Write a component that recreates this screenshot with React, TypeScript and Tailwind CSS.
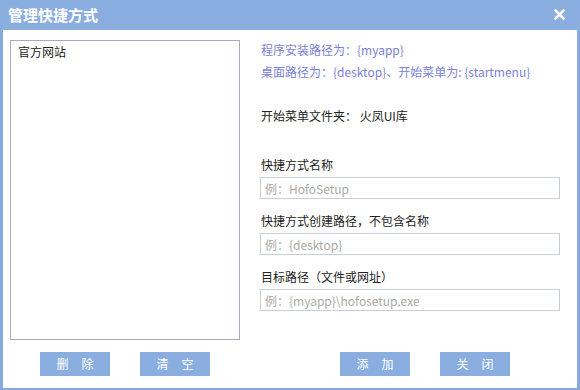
import React from "react";

const font = { fontFamily: '"Microsoft YaHei", "Noto Sans CJK SC", "Noto Sans", sans-serif' };

type Field = {
  label: string;
  placeholder: string;
};

const fields: Field[] = [
  { label: "快捷方式名称", placeholder: "例：HofoSetup" },
  { label: "快捷方式创建路径，不包含名称", placeholder: "例：{desktop}" },
  { label: "目标路径（文件或网址）", placeholder: "例：{myapp}\\hofosetup.exe" },
];

function Button({ text }: { text: string }) {
  return (
    <button className="flex h-[24px] w-[70px] items-center justify-center gap-[13px] bg-[#8aaee0] text-[12px] text-white">
      {text.split("").map((c) => (
        <span key={c}>{c}</span>
      ))}
    </button>
  );
}

export default function App() {
  return (
    <div
      className="flex h-[390px] w-[580px] flex-col border-x-[3px] border-b-[2px] border-[#86aadf] bg-white text-[12px] text-[#222]"
      style={font}
    >
      {/* title bar */}
      <div className="-mx-[3px] flex h-[30px] shrink-0 items-center justify-between bg-[#8aaee0] pl-[8px] pr-[15px]">
        <span className="text-[15px] font-bold text-white">管理快捷方式</span>
        <svg width="11" height="11" viewBox="0 0 11 11" className="mb-[2px]">
          <path d="M1.5 1.5 L9.5 9.5 M9.5 1.5 L1.5 9.5" stroke="white" strokeWidth="2.6" strokeLinecap="square" />
        </svg>
      </div>

      <div className="flex flex-1">
        {/* left: list */}
        <div className="flex w-[250px] flex-col pl-[7px] pt-[10px]">
          <div className="h-[300px] w-[230px] border border-[#a9a9c4] px-[7px] pt-[1px] leading-[20px]">
            官方网站
          </div>
          <div className="mt-[12px] flex w-[230px] justify-center gap-[30px]">
            <Button text="删除" />
            <Button text="清空" />
          </div>
        </div>

        {/* right: form */}
        <div className="flex flex-1 flex-col pl-[7px] pt-[9px]">
          <div className="leading-[22px] text-[#7d7fd4]">
            <div className="pl-[1px]">程序安装路径为：{"{myapp}"}</div>
            <div className="pl-[1px]">
              桌面路径为：{"{desktop}"}、开始菜单为: {"{startmenu}"}
            </div>
          </div>
          <div className="mt-[22px] pl-[1px] leading-[22px]">开始菜单文件夹： 火凤UI库</div>

          <div className="mt-[27px] flex flex-col gap-[11px]">
            {fields.map((f) => (
              <div key={f.label}>
                <div className="h-[22px] pl-[1px] leading-[22px]">{f.label}</div>
                <input
                  className="mt-px h-[22px] w-[300px] border border-[#c4d0e0] px-[4px] text-[12px] outline-none placeholder:text-[#a9a9a9]"
                  placeholder={f.placeholder}
                  style={font}
                />
              </div>
            ))}
          </div>

          <div className="mt-auto mb-[12px] flex gap-[30px] pl-[80px]">
            <Button text="添加" />
            <Button text="关闭" />
          </div>
        </div>
      </div>
    </div>
  );
}
